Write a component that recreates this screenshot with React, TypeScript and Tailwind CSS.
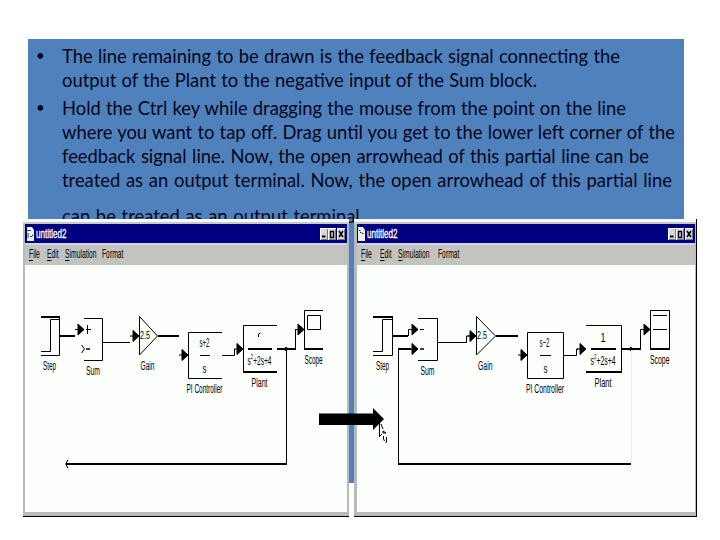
import { clsx } from "clsx";

const bullets = [
  [
    { text: "The line remaining to be drawn is the feedback signal connecting the", width: 558 },
    { text: "output of the Plant to the negative input of the Sum block.", width: 475 },
  ],
  [
    { text: "Hold the Ctrl key while dragging the mouse from the point on the line", width: 564 },
    { text: "where you want to tap off. Drag until you get to the lower left corner of the", width: 613 },
    { text: "feedback signal line. Now, the open arrowhead of this partial line can be", width: 587 },
    { text: "treated as an output terminal. Now, the open arrowhead of this partial line", width: 610 },
    { text: "can be treated as an output terminal.", width: 302, spaced: true },
  ],
];

const menus = [
  { first: "F", rest: "ile" },
  { first: "E", rest: "dit" },
  { first: "S", rest: "imulation" },
  { first: "F", rest: "ormat", last: true },
];

function Label({ x, y, w, size = 12.5, children }: { x: number; y: number; w: number; size?: number; children: string }) {
  return (
    <text x={x} y={y} textLength={w} lengthAdjust="spacingAndGlyphs" fontSize={size} fill="#000" stroke="none">
      {children}
    </text>
  );
}

// s^2+2s+4 under the Plant fraction bar
function Denominator({ x, w }: { x: number; w: number }) {
  return (
    <text x={x} y={365} textLength={w} lengthAdjust="spacingAndGlyphs" fontSize={12.5} fill="#000" stroke="none">
      s<tspan dy={-6} fontSize={8}>2</tspan><tspan dy={6}>+2s+4</tspan>
    </text>
  );
}

// Solid arrowhead whose tip is at x, y
function Head({ x, y }: { x: number; y: number }) {
  return <path d={`M${x - 9} ${y}h3M${x - 6} ${y - 5.5}L${x} ${y}L${x - 6} ${y + 5.5}z`} fill="#000" />;
}

function FirstDiagram() {
  return (
    <svg viewBox="25 265 322 247" className="block h-[247px] w-[322px] bg-[#fdfffc]" fill="none" stroke="#000" fontFamily="'Liberation Sans', sans-serif">
      <path d="M41 317h19" strokeWidth="2" />
      <path d="M59.500 317v38.500h-18.500M41 351.500h9.500v-32h9" />
      <path d="M60 336h15M158 336h21" strokeWidth="2" />
      <Head x={84} y={329.5} />
      <path d="M86 329.500h5M87.500 325v9M81.500 345l3 4l-3 4" />
      <path d="M86 349h4" strokeWidth="1.500" />
      <path d="M84 318.500h18.500v42H84M103 342.500h27" />
      <Head x={139} y={336} />
      <path d="M139.500 316.500v38.500L157.500 336z" />
      <Label x={140} y={339} w={10} size={11.5}>2.5</Label>
      <Head x={188} y={355} />
      <path d="M222 332.500h-33.500v46H222M200 355.500h10M222 355.500h12.500v-6.500" />
      <Label x={199.500} y={347} w={10}>s+2</Label>
      <Label x={202.500} y={373} w={4}>s</Label>
      <Head x={243} y={349} />
      <path d="M277 325.500h-33.500v46" />
      <path d="M243 372h34M248 349h24M277 349h19" strokeWidth="2" />
      <path d="M258.500 337v-3l2 -1" />
      <Denominator x={247.5} w={24} />
      <circle cx="286" cy="349" r="1.500" fill="#000" />
      <path d="M295.500 349v-19.500h2M286.500 349v115.500" />
      <Head x={304} y={329.5} />
      <path d="M323 310.500h-18.500V349M307.500 315.500h13v14h-13z" />
      <path d="M304 349h19M66 464h221" strokeWidth="2" />
      <path d="M65 464h2M67.500 460v1.500M66.500 461.500v5M67.500 466.500v1.500" />
      <Label x={43} y={370} w={13}>Step</Label>
      <Label x={86} y={375} w={14}>Sum</Label>
      <Label x={140.500} y={370} w={14}>Gain</Label>
      <Label x={186.500} y={393} w={36}>PI Controller</Label>
      <Label x={251.500} y={387} w={16}>Plant</Label>
      <Label x={304.500} y={364} w={18}>Scope</Label>
    </svg>
  );
}

function SecondDiagram() {
  return (
    <svg viewBox="357 265 338 247" className="block h-[247px] w-[338px] bg-[#fdfffc]" fill="none" stroke="#000" fontFamily="'Liberation Sans', sans-serif">
      <path d="M373 317h20" strokeWidth="2" />
      <path d="M392.500 317v38.500H373M373 351.500h9.500v-32h10" />
      <path d="M393 336h15M398 349h13M496 336h22" strokeWidth="2" />
      <path d="M408.500 336v-6.500h3M398.500 349v115.500" />
      <Head x={418} y={329.5} />
      <Head x={418} y={349} />
      <path d="M420 329.500h4" />
      <path d="M420 349h4" strokeWidth="1.500" />
      <path d="M418 318.500h19.500v42H418M438 342.500h28.500v-6.500h3" />
      <Head x={476} y={336} />
      <path d="M476.500 316.500v38.500L495.500 336z" />
      <Label x={477} y={339} w={10} size={11.5}>2.5</Label>
      <Head x={527} y={355} />
      <path d="M527.500 332.500h36v46h-36zM540 355.500h11M564 355.500h12.500v-6.500h2" />
      <Label x={539.500} y={347} w={10}>s−2</Label>
      <Label x={543.500} y={373} w={4}>s</Label>
      <Head x={586} y={349} />
      <path d="M586 325.500h35.500v46" />
      <path d="M586 372h36M591 349h25M622 349h19" strokeWidth="2" />
      <Label x={600.500} y={342} w={5}>1</Label>
      <Denominator x={590.5} w={25} />
      <circle cx="631" cy="349" r="1.500" fill="#000" />
      <path d="M640.500 349v-19.500h3" />
      <path d="M631.500 350v113" stroke="#eeeeee" />
      <Head x={650} y={329.5} />
      <path d="M650.500 310.500h19V349h-19zM653 315.500h14M653 329.500h14" />
      <path d="M650 349h20M398 464h233" strokeWidth="2" />
      <Label x={376} y={370} w={13}>Step</Label>
      <Label x={420.500} y={375} w={14}>Sum</Label>
      <Label x={478} y={370} w={14.500}>Gain</Label>
      <Label x={526} y={393} w={38}>PI Controller</Label>
      <Label x={594.500} y={387} w={17}>Plant</Label>
      <Label x={650} y={364} w={19.500}>Scope</Label>
    </svg>
  );
}

function ControlButton({ kind }: { kind: "min" | "max" | "close" }) {
  return (
    <svg viewBox="0 0 8 12" className="block h-3 w-2 bg-[#d8d8d8]" fill="none" stroke="#000">
      <path d="M.500 12V.500H8" stroke="#fff" />
      <path d="M7.500 1v10.500H1" stroke="#777" />
      {kind === "min" && <path d="M2 8.500h3.500" strokeWidth="2" />}
      {kind === "max" && <path d="M2.500 3v6.500h3V3M2 3.500h4" strokeWidth="1.400" />}
      {kind === "close" && <path d="M2 3l4 6M6 3l-4 6" strokeWidth="1.500" />}
    </svg>
  );
}

function ModelWindow({ wide = false }: { wide?: boolean }) {
  const widths = wide ? ["w-[18.5px]", "w-[18px]", "w-[40px]", "w-[22px]"] : ["w-[17.5px]", "w-[18.5px]", "w-[36.5px]", "w-[22px]"];

  return (
    <div
      className={clsx(
        "flex h-[298px] flex-col border-b border-b-black bg-[#b9bab9]",
        wide ? "w-[343px] border-r border-r-black" : "w-[326px]"
      )}
    >
      <div className="h-[3px] shrink-0 bg-[#fafafa]" />
      <div className="h-[2px] shrink-0 bg-[#c9c9c9]" />
      <div className={clsx("flex flex-col", wide ? "ml-[3px] w-[338px]" : "ml-[2px] w-[322px]")}>
        <div className="flex h-[19px] items-center bg-[#000080] pr-[2px]">
          <svg viewBox="0 0 7 14" className={clsx("h-[14px] w-[7px] shrink-0", wide ? "ml-[1px]" : "ml-[2px]")}>
            <path d="M0 0h5l2 3v11H0z" fill="#eee" />
            {wide ? (
              <path d="M1 3.500h1.500M2 5.500h1.500M4 6.500h1.500" stroke="#222" />
            ) : (
              <path d="M0 3.500h4M1 6v5M3 9.500h2l1-2" fill="none" stroke="#444" />
            )}
          </svg>
          <div className="ml-[2px] w-[32px] shrink-0 whitespace-nowrap font-['Liberation_Sans'] text-[13px] leading-[18px] text-white">
            <span className="inline-block origin-left scale-x-[0.62] [-webkit-text-stroke:0.35px_white]">untitled2</span>
          </div>
          <div className="ml-auto flex">
            <ControlButton kind="min" />
            <ControlButton kind="max" />
            <div className="ml-[1px]"><ControlButton kind="close" /></div>
          </div>
        </div>
        <div className="flex h-[22px] border-t-2 border-[#d5d2e8] bg-[#c3c4c0] pl-[4px] font-['Liberation_Sans'] text-[13.5px] leading-[17px] text-black">
          {menus.map((item, i) => (
            <div key={item.rest} className={clsx("shrink-0 whitespace-nowrap", widths[i])}>
              <span className="inline-block origin-left scale-x-[0.5]">
                {item.last ? "Format" : <><u className="underline-offset-2">{item.first}</u>{item.rest}</>}
              </span>
            </div>
          ))}
        </div>
        {wide ? <SecondDiagram /> : <FirstDiagram />}
      </div>
    </div>
  );
}

export default function App() {
  return (
    <main className="relative h-[540px] w-[720px] overflow-hidden bg-white pl-7 pt-[39px]">
      <section className="h-[444px] w-[656px] bg-[#4f81bd] pt-[5px]">
        <ul className="font-[Lato] text-[18.4px] leading-[24px] text-[#05061a]">
          {bullets.map((lines, i) => (
            <li key={i} className="mb-1 flex">
              <span className="w-[34px] shrink-0 pl-[8px] text-[15px] leading-[22px]">•</span>
              <div>
                {lines.map((line) => (
                  <div
                    key={line.text}
                    className={clsx("whitespace-nowrap [text-align-last:justify]", line.spaced && "mt-[12px]")}
                    style={{ width: line.width }}
                  >
                    {line.text}
                  </div>
                ))}
              </div>
            </li>
          ))}
        </ul>
      </section>

      <div className="absolute left-[23px] top-[219px]">
        <ModelWindow />
      </div>
      <div className="absolute left-[354px] top-[219px]">
        <ModelWindow wide />
      </div>

      <svg viewBox="0 0 68 38" className="absolute left-[319px] top-[407px] h-[38px] w-[68px]">
        <path d="M60.500 14v16M61 29l2-2M62 17l2 5" fill="none" stroke="#000" />
        <path d="M64 24l3 2h-3zM64.500 29v3l1 2M67.500 30v5l-1 1" fill="none" stroke="#000" />
        <path d="M0 6.500h54V1l11 11-11 11v-5H0z" fill="#000" />
      </svg>
    </main>
  );
}
